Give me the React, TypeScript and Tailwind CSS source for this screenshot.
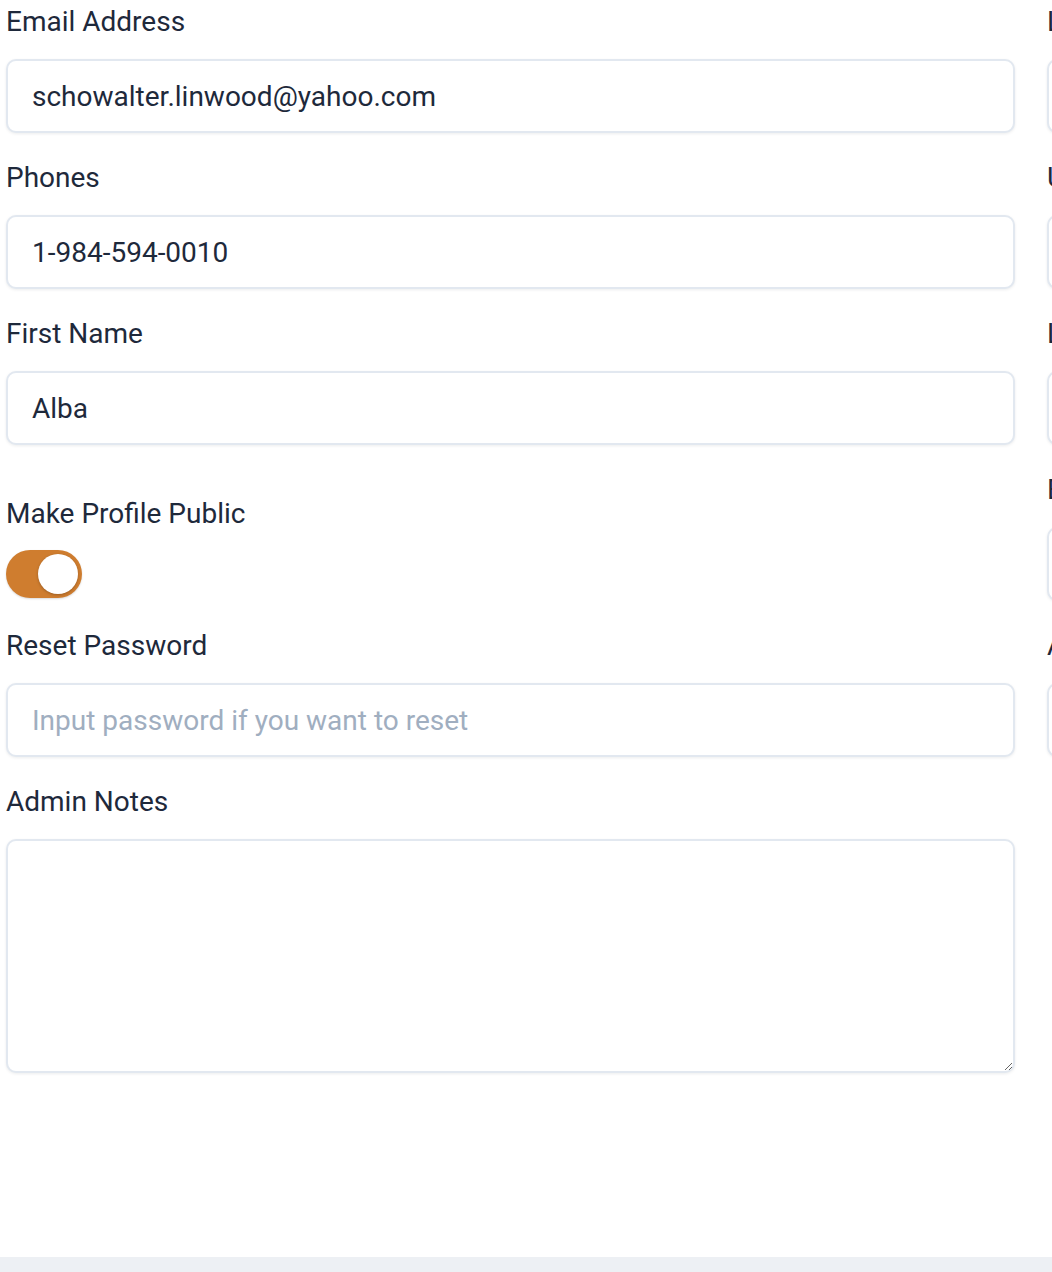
import { useState } from "react";

type Field = {
  label: string;
  value?: string;
  placeholder?: string;
};

const leftTop: Field[] = [
  { label: "Email Address", value: "schowalter.linwood@yahoo.com" },
  { label: "Phones", value: "1-984-594-0010" },
  { label: "First Name", value: "Alba" },
];

const rightFields: Field[] = [
  { label: "Login Name", value: "" },
  { label: "Username", value: "" },
  { label: "Last Name", value: "" },
  { label: "Birth Date", value: "" },
  { label: "Address", value: "" },
];

const inputClass =
  "h-[74px] w-full rounded-[10px] border-2 border-[#e2e8f0] bg-white px-[24px] text-[28px] text-[#1e293b] shadow-[0_1px_3px_rgba(15,23,42,0.08)] outline-none placeholder:text-[#a0aec0]";

function Label({ children }: { children: React.ReactNode }) {
  return (
    <label className="block h-10 whitespace-nowrap pt-px text-[28px] leading-10 text-[#1e293b]">
      {children}
    </label>
  );
}

function TextField({ field }: { field: Field }) {
  return (
    <div className="flex flex-col gap-[18px] pb-6">
      <Label>{field.label}</Label>
      <input
        className={inputClass}
        defaultValue={field.value}
        placeholder={field.placeholder}
      />
    </div>
  );
}

function Toggle() {
  const [on, setOn] = useState(true);
  return (
    <button
      type="button"
      onClick={() => setOn(!on)}
      className={`flex h-12 w-[76px] items-center rounded-full px-[4px] shadow-[0_1px_2px_rgba(0,0,0,0.15)] ${
        on ? "justify-end bg-[#cf7d2f]" : "justify-start bg-[#cbd5e1]"
      }`}
    >
      <span className="h-10 w-10 rounded-full bg-white shadow-[0_1px_3px_rgba(0,0,0,0.25)]" />
    </button>
  );
}

export default function App() {
  return (
    <div className="h-[1272px] w-[1052px] overflow-hidden bg-[#edf0f4] font-['Roboto',sans-serif]">
      <div className="h-[1257px] bg-white">
        <div className="grid w-[2050px] grid-cols-[1009px_1009px] gap-x-8 pl-[6px] pt-px">
          <div>
            {leftTop.map((f) => (
              <TextField key={f.label} field={f} />
            ))}

            <div className="flex flex-col gap-[17px] pt-6">
              <Label>Make Profile Public</Label>
              <Toggle />
            </div>

            <div className="pt-[27px]">
              <TextField
                field={{ label: "Reset Password", placeholder: "Input password if you want to reset" }}
              />
            </div>

            <div className="flex flex-col gap-[18px]">
              <Label>Admin Notes</Label>
              <textarea className="h-[234px] w-full resize rounded-[10px] border-2 border-[#e2e8f0] bg-white px-[24px] py-4 text-[28px] text-[#1e293b] shadow-[0_1px_3px_rgba(15,23,42,0.08)] outline-none" />
            </div>
          </div>

          <div>
            {rightFields.map((f) => (
              <TextField key={f.label} field={f} />
            ))}
          </div>
        </div>
      </div>
    </div>
  );
}
